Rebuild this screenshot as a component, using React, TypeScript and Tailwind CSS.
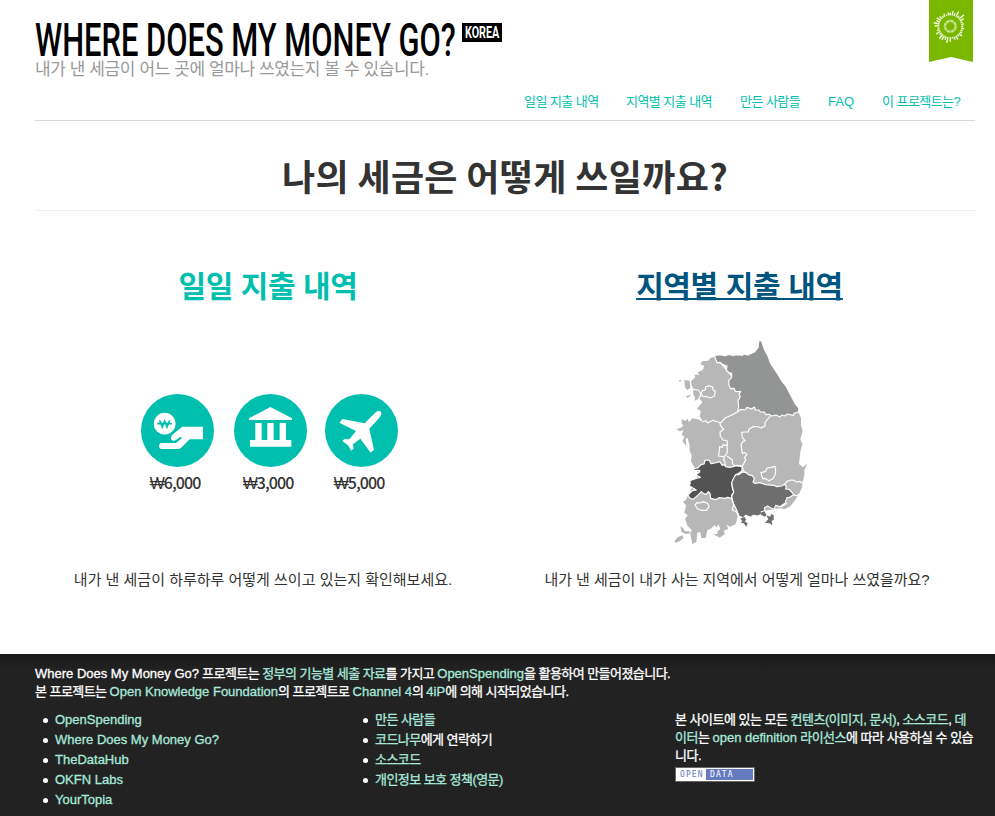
import React from "react";

const RAYS = [13.5, 15.5, 14, 17, 13.5, 18, 15.5, 13, 14, 13, 14, 13, 13.5, 15.5, 13, 15.5, 14, 12.5, 15.5, 17, 14.5, 16, 16.5, 13.5, 16, 14, 13, 15.5, 17, 15, 16, 14.5, 13, 14, 12.5, 14];

function Ribbon() {
  return (
    <svg className="block h-[62px] w-[44px]" viewBox="0 0 44 62">
      <path d="M0 0H44V62L22 57L0 62Z" fill="#7ab800" />
      <circle cx="21.3" cy="26.3" r="5.4" fill="none" stroke="#c3e48c" strokeWidth="2.4" strokeDasharray="3.6 0.5" />
      {RAYS.map((r, i) => (
        <line
          key={i}
          x1={21.3}
          x2={21.3}
          y1={26.3 - 11}
          y2={26.3 - r}
          stroke="#f4fbe6"
          strokeWidth="1.4"
          transform={`rotate(${i * 10 + (i > 18 ? 2 : 0)} 21.3 26.3)`}
        />
      ))}
    </svg>
  );
}

function HandIcon() {
  return (
    <svg className="block size-[73px]" viewBox="0 0 219 219">
      <circle cx="109.5" cy="109.5" r="109.5" fill="#00bfaf" />
      <circle cx="71" cy="89" r="32.5" fill="#fff" />
      <path d="M56 79L64 99L71 81L78 99L86 79M49 89H93" fill="none" stroke="#00bfaf" strokeWidth="5" />
      <path
        d="M186 98H124L94 122Q87 131 92 138Q97 143 105 138L118 128L123 132L105 147H62Q54 148 54 156T62 165H112Q118 165 122 160L146 136H186Z"
        fill="#fff"
      />
    </svg>
  );
}

function BankIcon() {
  return (
    <svg className="block size-[73px]" viewBox="0 0 219 219">
      <circle cx="109.5" cy="109.5" r="109.5" fill="#00bfaf" />
      <path d="M109 39L174 73V78H45V73ZM64 87H83V138H100V87H119V138H137V87H156V138H172V158H48V138H64Z" fill="#fff" />
    </svg>
  );
}

function PlaneIcon() {
  return (
    <svg className="block size-[73px]" viewBox="0 0 219 219">
      <circle cx="109.5" cy="109.5" r="109.5" fill="#00bfaf" />
      <path
        d="M152 55Q162 47 168 54Q172 61 163 71L133 104L147 167L137 176L106 134L84 151L86 164L79 170L69 154L52 141L58 135L73 136L93 111L43 86L52 75L119 88Z"
        fill="#fff"
      />
    </svg>
  );
}

function KoreaMap() {
  return (
    <svg className="block h-[220px] w-[150px]" viewBox="0 0 450 660">
      <g fill="#b7b7b7">
        <path d="M148 80L136 84L130 92L112 94L106 102L118 108L113 121L98 126L102 134L88 134L91 142L78 154L80 166L86 178L84 190L90 202L88 212L104 206L112 216L96 236L108 243L104 258L114 275L98 268L82 265L72 277L68 266L62 272L50 268L50 280L55 287L46 294L33 297L45 304L56 300L50 314L58 320L52 334L64 348L62 326L68 324L74 348L74 362L80 376L78 394L88 412L100 430L72 492L62 510L54 516L63 526L58 548L68 556L60 566L68 588L80 600L76 612L82 642L94 636L97 608L106 606L109 624L122 624L127 600L138 596L148 586L156 592L160 582L166 598L158 602L156 612L144 612L164 623L180 612L176 602L190 596L184 584L196 590L212 582L216 568L218 555L345 535L358 538L374 530L388 514L402 492L412 470L412 456L418 437L418 420L427 400L414 412L402 402L406 366L412 342L406 328L413 302L408 286L408 264L400 246L380 220L200 140Z" />
        <path d="M58 150L74 152L76 174L66 180L60 172ZM42 151L48 150L48 155L42 154ZM64 198L78 194L74 200L66 204ZM28 634L38 622L52 616L56 624L44 634L32 638ZM46 588L54 594L60 604L72 604L78 610L62 612L50 606ZM88 184L96 178L102 192L94 208L86 196Z" />
      </g>
      <g stroke="#fff" strokeWidth="3.5" strokeLinejoin="round">
        <path
          d="M148 76L165 74L180 77L192 73L204 76L218 74L232 76L236 72L248 75L268 66L279 53L282 28L290 34L299 60L309 78L317 100L337 130L352 155L364 170L377 195L390 220L402 235L400 246L387 250L386 257L368 252L358 258L350 255L345 261L333 255L320 258L312 253L302 254L298 246L286 246L282 240L271 240L268 231L260 237L246 232L240 240L228 238L218 245L221 228L219 212L226 200L222 192L227 185L211 184L207 175L197 176L192 167L191 152L200 142L200 130L191 128L184 120L186 108L172 103L166 97L156 98Z"
          fill="#939594"
        />
        <path
          d="M85 416L98 414L108 404L117 402L120 391L132 390L138 401L150 399L164 395L172 406L178 404L182 410L194 412L204 410L216 406L232 410L230 424L221 430L212 434L211 443L204 450L200 462L203 478L208 487L200 494L200 505L188 502L180 505L162 503L152 509L137 505L135 490L130 485L124 493L116 491L109 485L98 496L84 508L74 504L69 495L82 482L94 480L72 467L76 460L74 452L98 444L106 442L92 434L104 426L104 421L90 422Z"
          fill="#535353"
        />
        <path
          d="M222 434L232 426L244 428L250 434L262 437L268 446L264 456L269 460L284 458L302 464L326 466L336 470L350 468L358 463L364 468L362 477L372 478L380 486L386 494L374 502L366 503L360 520L344 530L332 526L328 538L318 534L308 528L298 534L300 542L288 546L292 552L278 558L266 556L256 562L242 556L234 564L222 558L214 538L205 520L200 500L206 486L202 470L200 458L206 444L212 434Z"
          fill="#6e6e6e"
        />
      </g>
      <g fill="none" stroke="#fff" strokeWidth="3.5" strokeLinejoin="round">
        <path d="M112 276L122 272L128 279L144 271L160 276L168 278L180 264L202 254L218 245" />
        <path d="M164 276L166 286L176 298L165 306L166 318L174 330L186 332L188 344L182 346L174 344L172 352L164 350L162 370L160 378L172 380L180 378L187 368L186 346" />
        <path d="M178 380L176 390L180 396L180 408M186 378L194 384L202 390L202 400L208 406L220 408L232 408L238 398L242 388L238 382L246 374L240 368L232 370L230 358L228 344L234 334L240 332L232 322L230 308L236 306L250 306L252 298L264 290L278 290L288 294L300 288L300 278L306 270L316 258" />
        <path d="M108 190L112 182L121 180L122 171L131 167L143 171L144 180L151 184L148 198L136 204L124 200L112 199Z" />
        <path d="M86 178L100 180L108 192L102 206L92 218" />
        <path d="M90 525L96 518L106 519L114 515L128 520L132 530L124 541L108 541L97 536Z" />
        <path d="M290 438L288 428L302 424L306 414L318 412L330 409L332 424L330 434L324 446L312 452L302 446L294 446Z" />
        <path d="M232 410L236 424L246 430M358 464L366 454L378 450L388 451L394 456L404 454L412 460M386 495L394 497L404 492M346 532L366 520" />
        <path d="M218 555L214 545L202 540L206 524L200 505" />
      </g>
      <path d="M226 566L238 560L244 570L239 574L248 580L244 590L236 580L228 578L232 572ZM286 548L298 544L304 554L300 560L290 556ZM304 556L316 560L318 552L326 556L326 570L320 572L322 586L314 580L300 578L310 568Z" fill="#6e6e6e" />
      <path d="M198 560L212 558L212 572L204 580L196 574Z" fill="#b7b7b7" />
    </svg>
  );
}

// Hangul is set slightly tighter than Latin words inside the same line.
function Mixed({ children }: { children: string }) {
  return (
    <>
      {children.split(/([A-Za-z0-9][A-Za-z0-9? ]*[A-Za-z0-9?]|[A-Za-z0-9])/).map((part, i) =>
        i % 2 ? (
          <span key={i} className="tracking-normal">
            {part}
          </span>
        ) : (
          part
        ),
      )}
    </>
  );
}

function Link({ children }: { children: string }) {
  return (
    <a href="#" className="text-[#a8e8da]">
      <Mixed>{children}</Mixed>
    </a>
  );
}

function Item({ children }: { children: React.ReactNode }) {
  return (
    <li className="flex items-center">
      <span className="mr-[7px] ml-[8px] size-[5px] rounded-full bg-white" />
      <span>{children}</span>
    </li>
  );
}

const NAV = [
  { label: "일일 지출 내역", box: "w-[74px]" },
  { label: "지역별 지출 내역", box: "w-[86px]" },
  { label: "만든 사람들", box: "w-[60px]" },
  { label: "FAQ", box: "w-[26px]" },
  { label: "이 프로젝트는?", box: "w-[78px]" },
];

const ITEMS = [
  { Icon: HandIcon, amount: "6,000", gap: "" },
  { Icon: BankIcon, amount: "3,000", gap: "ml-[20px]" },
  { Icon: PlaneIcon, amount: "5,000", gap: "ml-[18px]" },
];

export default function App() {
  return (
    <div className="h-[816px] w-[995px] overflow-hidden bg-white font-['Liberation_Sans','Noto_Sans_CJK_KR',sans-serif] text-[#333]">
      <header className="ml-[35px] flex h-[121px] w-[940px] flex-col border-b border-[#d9d9d9]">
        <div className="flex h-[84px] justify-between">
          <div className="pt-[20px]">
            <div className="flex h-[39px]">
              <h1 className="h-[39px] w-[427px] whitespace-nowrap">
                <span className="inline-block origin-left scale-x-[0.671] font-['Roboto',sans-serif] text-[46px] leading-[41px] font-medium text-black">
                  WHERE DOES MY MONEY GO?
                </span>
              </h1>
              <div className="mt-[3px] flex h-[19px] w-[40px] items-center bg-black pl-[3px]">
                <span className="inline-block origin-left scale-x-[0.67] font-['Roboto',sans-serif] text-[16px] leading-[19px] font-bold text-white">KOREA</span>
              </div>
            </div>
            <p className="text-[17px] leading-[22px] tracking-[-0.4px] whitespace-nowrap text-[#999]">내가 낸 세금이 어느 곳에 얼마나 쓰였는지 볼 수 있습니다.</p>
          </div>
          <div className="mr-[2px]">
            <Ribbon />
          </div>
        </div>
        <nav className="flex justify-end gap-[28px] pt-[9px] pr-[15px] text-[13px] leading-[18px] tracking-[-0.55px] whitespace-nowrap text-[#00bfaf]">
          {NAV.map((n) => (
            <a key={n.label} href="#" className={n.box}>
              <Mixed>{n.label}</Mixed>
            </a>
          ))}
        </nav>
      </header>

      <h2 className="ml-[35px] flex h-[90px] w-[940px] items-center justify-center border-b border-[#eee] pt-[18px] font-['Noto_Sans_CJK_KR',sans-serif] text-[36px] font-bold tracking-[0.35px]">
        나의 세금은 어떻게 쓰일까요?
      </h2>

      <main className="ml-[35px] flex h-[443px] w-[940px]">
        <section className="flex w-[470px] flex-col items-center pr-[2px]">
          <h3 className="mt-[54px] mr-[2px] h-[44px] text-[30px] leading-[44px] font-bold tracking-[-0.4px] text-[#00bfaf]">일일 지출 내역</h3>
          <div className="mt-[85px] flex">
            {ITEMS.map(({ Icon, amount, gap }) => (
              <div key={amount} className={gap}>
                <Icon />
                <p className="mt-[3px] w-[69px] text-center font-['Noto_Sans_CJK_KR',sans-serif] text-[16px] leading-[24px] font-medium tracking-[-0.95px]">
                  <span className="font-['Liberation_Sans',sans-serif]">₩</span>
                  {amount}
                </p>
              </div>
            ))}
          </div>
          <p className="mt-[72px] mr-[12px] text-[15px] leading-[24px] whitespace-nowrap">내가 낸 세금이 하루하루 어떻게 쓰이고 있는지 확인해보세요.</p>
        </section>
        <section className="flex w-[470px] flex-col items-center">
          <h3 className="mt-[54px] mr-[1px] h-[44px] text-[30px] leading-[44px] font-bold tracking-[-0.35px] text-[#005580] underline decoration-2">지역별 지출 내역</h3>
          <div className="mt-[21px]">
            <KoreaMap />
          </div>
          <p className="mt-[18px] mr-[6px] text-[15px] leading-[24px] tracking-[-0.05px] whitespace-nowrap">내가 낸 세금이 내가 사는 지역에서 어떻게 얼마나 쓰였을까요?</p>
        </section>
      </main>

      <footer className="h-[162px] bg-[#222] bg-linear-to-b from-[#191919] to-[#222] to-10% pt-[11px] pl-[35px] text-[13px] leading-[18px] tracking-[-0.55px] text-white [-webkit-text-stroke:0.3px]">
        <p className="whitespace-nowrap">
          <Mixed>Where Does My Money Go? 프로젝트는 </Mixed>
          <Link>정부의 기능별 세출 자료</Link>를 가지고 <Link>OpenSpending</Link>을 활용하여 만들어졌습니다.
        </p>
        <p className="whitespace-nowrap">
          본 프로젝트는 <Link>Open Knowledge Foundation</Link>의 프로젝트로 <Link>Channel 4</Link>의 <Link>4iP</Link>에 의해 시작되었습니다.
        </p>
        <div className="mt-[10px] flex">
          <ul className="-mt-px w-[320px] leading-[20px]">
            <Item><Link>OpenSpending</Link></Item>
            <Item><Link>Where Does My Money Go?</Link></Item>
            <Item><Link>TheDataHub</Link></Item>
            <Item><Link>OKFN Labs</Link></Item>
            <Item><Link>YourTopia</Link></Item>
          </ul>
          <ul className="-mt-px w-[320px] leading-[20px]">
            <Item><Link>만든 사람들</Link></Item>
            <Item><Link>코드나무</Link>에게 연락하기</Item>
            <Item><Link>소스코드</Link></Item>
            <Item><Link>개인정보 보호 정책(영문)</Link></Item>
          </ul>
          <div className="tracking-[-0.5px] whitespace-nowrap">
            <p>본 사이트에 있는 모든 <Link>컨텐츠(이미지, 문서)</Link>, <Link>소스코드</Link>, <Link>데</Link></p>
            <p><Link>이터</Link>는 <Link>open definition 라이선스</Link>에 따라 사용하실 수 있습</p>
            <p>니다.</p>
            <div className="mt-[2px] flex h-[15px] w-[80px] border border-[#666] bg-white p-px font-['DejaVu_Sans_Mono',monospace] text-[8px] leading-[11px] [-webkit-text-stroke:0px]">
              <span className="w-[29px] pl-[3px] tracking-[1.1px] text-[#667abf]">OPEN</span>
              <span className="flex-1 bg-[#667abf] pl-[4px] tracking-[1.1px] text-white">DATA</span>
            </div>
          </div>
        </div>
      </footer>
    </div>
  );
}
